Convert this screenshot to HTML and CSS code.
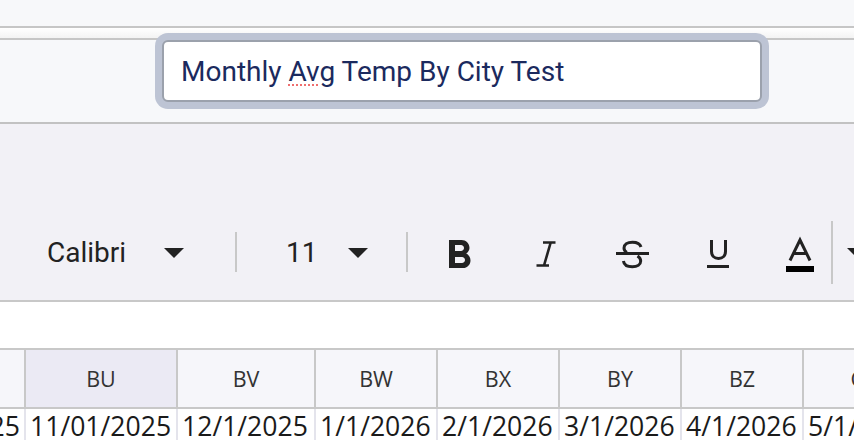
FILE: index.html
```html
<!DOCTYPE html>
<html lang="en">
<head>
<meta charset="utf-8">
<title>Sheet</title>
<link rel="stylesheet" href="styles.css">
</head>
<body>
<div class="app">
  <div class="top-strip"></div>
  <div class="tab-band"></div>
  <div class="title-area">
    <div class="title-box"><span class="title-text">Monthly <span class="misspelled">Avg</span> Temp By City Test</span></div>
  </div>
  <div class="toolbar">
    <span class="font-name">Calibri</span>
    <svg class="icon arrow arrow-font" viewBox="0 0 48 48"><path d="M14 20 L24 30 L34 20 Z"/></svg>
    <span class="sep sep-1"></span>
    <span class="size-name">11</span>
    <svg class="icon arrow arrow-size" viewBox="0 0 48 48"><path d="M14 20 L24 30 L34 20 Z"/></svg>
    <span class="sep sep-2"></span>
    <svg class="icon btn-bold" viewBox="0 0 48 48"><path transform="translate(0,4) scale(2)" d="M15.6 10.79c.97-.67 1.65-1.77 1.650-2.79 0-2.26-1.75-4-4-4H7v14h7.04c2.09 0 3.71-1.7 3.71-3.79 0-1.520-.86-2.82-2.150-3.42zM10 6.5h3c.83 0 1.5.67 1.5 1.5s-.67 1.5-1.5 1.5h-3v-3zm3.5 9H10v-3h3.5c.83 0 1.5.67 1.5 1.5s-.67 1.5-1.5 1.5z"/></svg>
    <svg class="icon btn-gap" viewBox="0 0 48 48"><g class="stroke thin"><path d="M22 14.5 H34.5 M29.7 14.5 L23 37.5 M15.5 37.5 H28"/></g></svg>
    <svg class="icon btn-gap" viewBox="0 0 48 48"><g class="stroke"><path d="M9 25.5 H42"/><path d="M34 19 C33 15.8 30 14.2 25.5 14.2 C20.3 14.2 17 16.6 17 20 C17 22 18 23.4 19.8 24.5"/><path d="M30.5 28 C32.7 29.4 33.7 31 33.7 33 C33.7 36.6 30.2 38.8 25.3 38.8 C20.4 38.8 17 36.6 16.4 33"/></g></svg>
    <svg class="icon btn-gap" viewBox="0 0 48 48"><g class="stroke"><path d="M18.5 12 V23.5 C18.5 27.6 21.2 30.5 25.5 30.5 C29.8 30.5 32.5 27.6 32.5 23.5 V12"/></g><rect x="14" y="37" width="22" height="3"/></svg>
    <svg class="icon btn-a" viewBox="0 0 48 48"><g class="stroke"><path d="M14 32.5 L24 12 L34 32.5 M17.5 25.5 H30.5"/></g><rect x="10" y="38" width="28" height="6" fill="#000"/></svg>
    <span class="sep sep-3"></span>
    <svg class="icon arrow" viewBox="0 0 48 48"><path d="M14 20 L24 30 L34 20 Z"/></svg>
  </div>
  <div class="spacer"></div>
  <div class="sheet">
    <div class="row header-row">
      <div class="hcell"></div>
      <div class="hcell selected">BU</div>
      <div class="hcell">BV</div>
      <div class="hcell">BW</div>
      <div class="hcell">BX</div>
      <div class="hcell">BY</div>
      <div class="hcell">BZ</div>
      <div class="hcell">CA</div>
    </div>
    <div class="row data-row">
      <div class="dcell first">10/1/2025</div>
      <div class="dcell">11/01/2025</div>
      <div class="dcell">12/1/2025</div>
      <div class="dcell">1/1/2026</div>
      <div class="dcell">2/1/2026</div>
      <div class="dcell">3/1/2026</div>
      <div class="dcell">4/1/2026</div>
      <div class="dcell">5/1/2026</div>
    </div>
  </div>
</div>
</body>
</html>
```
FILE: styles.css
```css
* { box-sizing: border-box; }
html, body { margin: 0; padding: 0; }
body {
  width: 854px;
  height: 440px;
  overflow: hidden;
  background: #ffffff;
  font-family: Roboto, "Noto Sans", sans-serif;
}
.app { width: 854px; }

.top-strip { height: 26px; background: #f7f8fa; }
.tab-band {
  height: 14px;
  border-top: 2px solid #c6c6c6;
  border-bottom: 2px solid #c6c6c6;
  background: linear-gradient(#ffffff, #f3f3f3);
}
.title-area {
  height: 84px;
  background: #f7f8fa;
  border-bottom: 2px solid #c2c2c2;
  padding-left: 162px;
}
.title-box {
  width: 600px;
  height: 62px;
  background: #ffffff;
  border: 2px solid #9ba1ac;
  border-radius: 6px;
  box-shadow: 0 0 0 7px #bdc4d4;
  padding-left: 17px;
  display: flex;
  align-items: center;
  font-size: 28px;
  color: #1b2a5e;
  white-space: nowrap;
}
.misspelled {
  text-decoration: underline dotted #ef6f6f;
  text-decoration-thickness: 2px;
  text-underline-offset: 4px;
}

.toolbar {
  height: 178px;
  background: #f2f1f6;
  border-bottom: 2px solid #c8c8c8;
  padding-top: 80px;
  padding-left: 47px;
  display: flex;
  align-items: center;
  overflow: hidden;
}
.font-name, .size-name {
  font-size: 28px;
  color: #222222;
  white-space: nowrap;
}
.font-name { width: 80px; }
.size-name { width: 33px; margin-left: 49px; }
.icon { width: 48px; height: 48px; flex: none; fill: #222222; }
.icon .stroke { fill: none; stroke: #222222; stroke-width: 3px; }
.icon .stroke.thin { stroke-width: 2.6px; }
.arrow-font { margin-left: 24px; }
.arrow-size { margin-left: 16px; }
.sep { flex: none; width: 2px; height: 40px; background: #c8c8c8; }
.sep-1 { margin-left: 37px; }
.sep-2 { margin-left: 24px; }
.sep-3 { margin-left: 7px; height: 63px; }
.btn-bold { margin-left: 27px; }
.btn-gap { margin-left: 38px; }
.btn-a { margin-left: 35px; }

.spacer { height: 46px; background: #ffffff; }

.row {
  display: grid;
  grid-template-columns: 26px 152px 138px 122px 122px 122px 122px 122px;
}
.header-row {
  border-top: 2px solid #c8c8c8;
  border-bottom: 2px solid #c8c8c8;
}
.hcell {
  height: 57px;
  background: #f6f6fa;
  border-right: 2px solid #c8c8c8;
  display: flex;
  align-items: center;
  justify-content: center;
  font-family: "Open Sans", "Noto Sans", sans-serif;
  font-size: 21.5px;
  color: #333333;
  white-space: nowrap;
  overflow: hidden;
}
.hcell.selected { background: #ebeaf4; }
.dcell {
  height: 40px;
  border-right: 2px solid #e4e4ec;
  font-family: "Open Sans", "Noto Sans", sans-serif;
  font-size: 26.6px;
  line-height: 35px;
  color: #1a1a1a;
  padding-left: 4px;
  white-space: nowrap;
  overflow: hidden;
}
.dcell.first {
  padding-left: 0;
  padding-right: 4px;
  display: flex;
  justify-content: flex-end;
}
```
